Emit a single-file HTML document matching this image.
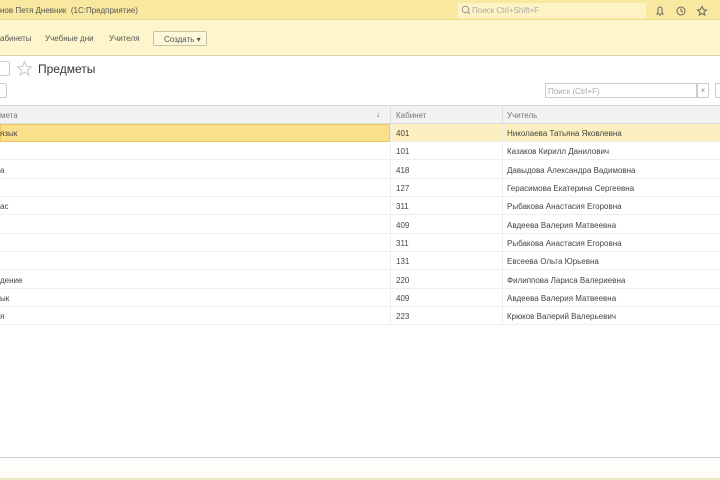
<!DOCTYPE html>
<html><head><meta charset="utf-8"><style>
*{margin:0;padding:0;box-sizing:border-box}
body{width:720px;height:480px;overflow:hidden;background:#fff;font-family:"Liberation Sans",sans-serif;font-size:8px;color:#444;position:relative}
.a{position:absolute}
#top{left:0;top:0;width:720px;height:20px;background:#f9e9a0;border-bottom:1px solid #eedc8c}
#tb{left:0;top:20px;width:720px;height:36px;background:#fdf6cc;border-bottom:1px solid #d8d2b0}
.t{white-space:nowrap}
#hdr{left:0;top:105px;width:720px;height:19px;background:#f2f2f2;border-top:1px solid #d8d8d8;border-bottom:1px solid #ddd}
.row{position:absolute;left:0;width:720px;height:18px;border-bottom:1px solid #eee}
.row span{position:absolute;top:5px;white-space:nowrap}
</style></head><body>
<div class="a" id="top"></div>
<div class="a t" style="left:0;top:6px;color:#555">нов Петя Дневник &nbsp;(1С:Предприятие)</div>
<div class="a" style="left:458px;top:3px;width:188px;height:15px;background:#fdf3c4"></div>
<svg class="a" style="left:461px;top:5px" width="10" height="10"><circle cx="4.5" cy="4.5" r="3.3" fill="none" stroke="#999" stroke-width="1"/><line x1="7" y1="7" x2="9" y2="9" stroke="#999"/></svg>
<div class="a t" style="left:472px;top:6px;color:#aaa">Поиск Ctrl+Shift+F</div>
<svg class="a" style="left:654px;top:5px" width="60" height="12" fill="none" stroke="#666" stroke-width="1"><path d="M3 9 L9 9 L8 7 L8 4 A2 2 0 0 0 4 4 L4 7 Z M5.5 10.5 h1"/><circle cx="27" cy="6" r="4"/><path d="M27 3.5 V6 L29 7"/><path d="M48 1.5 L49.5 4.5 L52.5 5 L50 7 L50.8 10 L48 8.5 L45.2 10 L46 7 L43.5 5 L46.5 4.5 Z"/></svg>
<div class="a" id="tb"></div>
<div class="a t" style="left:0;top:34px;color:#555">абинеты</div>
<div class="a t" style="left:45px;top:34px;color:#555">Учебные дни</div>
<div class="a t" style="left:109px;top:34px;color:#555">Учителя</div>
<div class="a t" style="left:153px;top:31px;width:54px;height:15px;border:1px solid #c8c2a0;border-radius:2px;background:#fdf8da;color:#555;padding:3px 0 0 10px">Создать ▾</div>
<div class="a" style="left:-4px;top:61px;width:14px;height:15px;border:1px solid #ccc;border-radius:2px"></div>
<svg class="a" style="left:16px;top:60px" width="17" height="17"><path d="M8.5 1.5 L10.5 6.5 L15.5 6.8 L11.6 10 L12.9 15 L8.5 12.2 L4.1 15 L5.4 10 L1.5 6.8 L6.5 6.5 Z" fill="none" stroke="#c8c8c8"/></svg>
<div class="a t" style="left:38px;top:62px;font-size:12px;color:#333">Предметы</div>
<div class="a" style="left:-4px;top:83px;width:11px;height:15px;border:1px solid #ccc;border-radius:2px"></div>
<div class="a t" style="left:545px;top:83px;width:152px;height:15px;border:1px solid #ccc;color:#aaa;padding:3px 0 0 2px">Поиск (Ctrl+F)</div>
<div class="a" style="left:697px;top:83px;width:12px;height:15px;border:1px solid #ccc;color:#888;text-align:center;line-height:14px">×</div>
<div class="a" style="left:715px;top:83px;width:10px;height:15px;border:1px solid #ccc"></div>
<div class="a" id="hdr"></div>
<div class="a t" style="left:0;top:111px;color:#777">мета</div>
<div class="a t" style="left:376px;top:110px;color:#666">↓</div>
<div class="a" style="left:390px;top:105px;width:1px;height:19px;background:#ddd"></div>
<div class="a" style="left:502px;top:105px;width:1px;height:19px;background:#ddd"></div>
<div class="a t" style="left:396px;top:111px;color:#777">Кабинет</div>
<div class="a t" style="left:507px;top:111px;color:#777">Учитель</div>
<div class="row" style="top:124px;background:#fdf0c0"><div class="a" style="left:0;top:0;width:390px;height:18px;background:#fbe08c;border:1px solid #f0c860"></div><span style="left:0">язык</span><span style="left:396px">401</span><span style="left:507px">Николаева Татьяна Яковлевна</span></div>
<div class="row" style="top:142px"><span style="left:396px">101</span><span style="left:507px">Казаков Кирилл Данилович</span></div>
<div class="row" style="top:161px"><span style="left:0">а</span><span style="left:396px">418</span><span style="left:507px">Давыдова Александра Вадимовна</span></div>
<div class="row" style="top:179px"><span style="left:396px">127</span><span style="left:507px">Герасимова Екатерина Сергеевна</span></div>
<div class="row" style="top:197px"><span style="left:0">ас</span><span style="left:396px">311</span><span style="left:507px">Рыбакова Анастасия Егоровна</span></div>
<div class="row" style="top:216px"><span style="left:396px">409</span><span style="left:507px">Авдеева Валерия Матвеевна</span></div>
<div class="row" style="top:234px"><span style="left:396px">311</span><span style="left:507px">Рыбакова Анастасия Егоровна</span></div>
<div class="row" style="top:252px"><span style="left:396px">131</span><span style="left:507px">Евсеева Ольга Юрьевна</span></div>
<div class="row" style="top:271px"><span style="left:0">дение</span><span style="left:396px">220</span><span style="left:507px">Филиппова Лариса Валериевна</span></div>
<div class="row" style="top:289px"><span style="left:0">ык</span><span style="left:396px">409</span><span style="left:507px">Авдеева Валерия Матвеевна</span></div>
<div class="row" style="top:307px"><span style="left:0">я</span><span style="left:396px">223</span><span style="left:507px">Крюков Валерий Валерьевич</span></div>
<div class="a" style="left:390px;top:124px;width:1px;height:201px;background:#eee"></div>
<div class="a" style="left:502px;top:124px;width:1px;height:201px;background:#eee"></div>
<div class="a" style="left:0;top:457px;width:720px;height:1px;background:#ccc"></div>
<div class="a" style="left:0;top:458px;width:720px;height:22px;background:linear-gradient(#fff,#fefbee)"></div>
<div class="a" style="left:0;top:478px;width:720px;height:2px;background:#ece6c6"></div>
</body></html>
